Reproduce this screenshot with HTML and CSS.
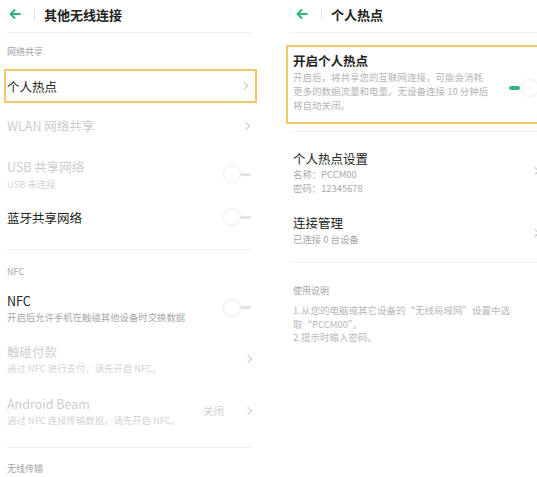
FILE: index.html
```html
<!DOCTYPE html>
<html lang="zh-CN">
<head>
<meta charset="utf-8">
<link rel="stylesheet" href="styles.css">
</head>
<body>
<div class="screen">
  <div class="panel left">
    <div class="header">
      <svg class="back" width="12" height="10" viewBox="0 0 12 10"><path d="M11 5H1.5M5.5 1L1.5 5L5.5 9" fill="none" stroke="#2fb57a" stroke-width="1.8" stroke-linecap="round" stroke-linejoin="round"/></svg>
      <span class="vsep"></span>
      <span class="htitle">其他无线连接</span>
    </div>
    <div class="label l1">网络共享</div>
    <div class="row hl">
      <span class="t">个人热点</span>
      <span class="chev"></span>
    </div>
    <div class="row wlan">
      <span class="t dis">WLAN 网络共享</span>
      <span class="chev"></span>
    </div>
    <div class="row usb">
      <div class="txt"><div class="t dis">USB 共享网络</div><div class="s dis2">USB 未连接</div></div>
      <span class="toggle off"><i></i><b></b></span>
    </div>
    <div class="row bt">
      <span class="t">蓝牙共享网络</span>
      <span class="toggle off"><i></i><b></b></span>
    </div>
    <div class="divider d1"></div>
    <div class="label l2">NFC</div>
    <div class="row r52">
      <div class="txt"><div class="t">NFC</div><div class="s">开启后允许手机在触碰其他设备时交换数据</div></div>
      <span class="toggle off"><i></i><b></b></span>
    </div>
    <div class="row r52">
      <div class="txt"><div class="t dis">触碰付款</div><div class="s dis2">通过 NFC 进行支付，请先开启 NFC。</div></div>
      <span class="chev"></span>
    </div>
    <div class="row r52">
      <div class="txt"><div class="t dis">Android Beam</div><div class="s dis2">通过 NFC 连接传输数据，请先开启 NFC。</div></div>
      <span class="val">关闭</span>
      <span class="chev"></span>
    </div>
    <div class="divider d2"></div>
    <div class="label l3">无线传输</div>
  </div>

  <div class="panel right">
    <div class="header">
      <svg class="back" width="12" height="10" viewBox="0 0 12 10"><path d="M11 5H1.5M5.5 1L1.5 5L5.5 9" fill="none" stroke="#2fb57a" stroke-width="1.8" stroke-linecap="round" stroke-linejoin="round"/></svg>
      <span class="vsep"></span>
      <span class="htitle">个人热点</span>
    </div>
    <div class="hotbox">
      <div class="txt">
        <div class="t b">开启个人热点</div>
        <div class="desc">开启后，将共享您的互联网连接，可能会消耗<br>更多的数据流量和电量。无设备连接 10 分钟后<br>将自动关闭。</div>
      </div>
      <span class="toggle on"><b></b><i></i></span>
    </div>
    <div class="divider d3"></div>
    <div class="row set">
      <div class="txt"><div class="t">个人热点设置</div><div class="s">名称：PCCM00</div><div class="s">密码：12345678</div></div>
      <span class="chev"></span>
    </div>
    <div class="row conn">
      <div class="txt"><div class="t">连接管理</div><div class="s">已连接 0 台设备</div></div>
      <span class="chev"></span>
    </div>
    <div class="divider d4"></div>
    <div class="label l4">使用说明</div>
    <div class="help">
      <div>1.从您的电脑或其它设备的“无线局域网”设置中选</div>
      <div>取“PCCM00”。</div>
      <div>2.提示时输入密码。</div>
    </div>
  </div>
</div>
</body>
</html>
```

FILE: styles.css
```css
* { box-sizing: border-box; }
html, body { margin: 0; padding: 0; background: #fff; }
body {
  font-family: "Noto Sans CJK SC", "Noto Sans", sans-serif;
  color: #222;
  width: 537px;
  height: 477px;
  overflow: hidden;
}
.screen {
  display: grid;
  grid-template-columns: 268px 269px;
  height: 477px;
}
.panel { overflow: hidden; position: relative; }
.left { padding: 0 16px 0 7px; }
.right { padding: 0 0 0 25px; }

.header {
  height: 33px;
  display: flex;
  align-items: center;
  border-bottom: 1px solid #efefef;
  padding-bottom: 4px;
}
.left .back { margin-left: 2px; }
.right .header { margin-left: -3px; }
.right .back { margin-left: 6px; }
.vsep {
  display: inline-block;
  width: 1px;
  height: 12px;
  background: #e6e6e6;
  margin: 0 9px 0 13px;
}
.htitle { font-size: 13px; font-weight: 700; color: #222; }

.label { font-size: 9px; color: #a6a6a6; line-height: 12px; }
.l1 { padding-top: 13px; height: 36px; }
.l2 { padding-top: 16px; height: 32px; }
.l3 { padding-top: 15px; }
.l4 { padding-top: 22px; height: 41px; }

.row { display: flex; align-items: center; }
.row .txt { flex: 1; }
.t { font-size: 12.5px; line-height: 17px; color: #222; }
.t.b { font-weight: 700; }
.s { font-size: 9.4px; line-height: 14px; color: #a8a8a8; }
.dis { color: #cdcdcd; }
.dis2 { color: #d4d4d4; }
.row > .t { flex: 1; }

.hl {
  height: 34px;
  margin: 0 -5px 0 -3px;
  padding: 0 6px 0 1px;
  border: 2px solid #f2c86a;
}
.wlan { height: 45px; padding-right: 1px; }
.usb { height: 50px; padding-top: 2px; }
.usb .s { margin-top: 2px; }
.bt { height: 38px; }
.r52 { height: 51.5px; }
.r52 .s { margin-top: 1px; }
.r52 .chev { margin-right: 1px; }
.d1 { margin-top: 13px; }
.d2 { margin-top: 10px; }

.divider { height: 1px; background: #f0f0f0; }
.right .divider { margin-left: -3px; }

.chev {
  display: inline-block;
  width: 6px;
  height: 6px;
  border-top: 1.2px solid #c9c9c9;
  border-right: 1.2px solid #c9c9c9;
  transform: rotate(45deg);
  margin-right: 2px;
}
.val { font-size: 10.5px; color: #cfcfcf; margin-right: 21px; }

.toggle { display: inline-flex; align-items: center; }
.toggle i {
  display: block;
  width: 18px;
  height: 18px;
  border-radius: 50%;
  background: #fff;
  border: 1px solid #f0f0f0;
  box-shadow: 0 0 2px rgba(0,0,0,0.06);
}
.toggle b {
  display: block;
  width: 11px;
  height: 3px;
  border-radius: 2px;
  background: #e3e3e3;
}
.toggle.off { margin-right: 1px; }
.toggle.off b { margin-left: -1px; }
.toggle.on b { background: #2fb57a; width: 11px; height: 4px; margin-right: 1px; }

.hotbox {
  margin: 12px -10px 0 -7px;
  height: 79px;
  border: 2px solid #f2c86a;
  padding: 4px 0 0 5px;
  display: flex;
  align-items: center;
}
.hotbox .txt { width: 205px; flex: none; align-self: flex-start; }
.hotbox .t { font-size: 12.5px; line-height: 19px; }
.desc { font-size: 9.5px; line-height: 14px; color: #b5b5b5; white-space: nowrap; }
.hotbox .toggle { margin-left: auto; margin-top: 3px; margin-right: 6px; }

.d3 { margin-top: 7px; }
.set { height: 69px; padding-top: 12px; }
.conn { height: 57px; padding-top: 0; }
.conn .s { margin-top: 1px; }
.right .row .chev { margin-right: -1px; }
.set .chev { margin-top: -4px; }
.conn .chev { margin-top: 6px; }
.d4 { margin-top: 4px; }

.help { font-size: 9.5px; line-height: 13.5px; color: #b8b8b8; }
```
